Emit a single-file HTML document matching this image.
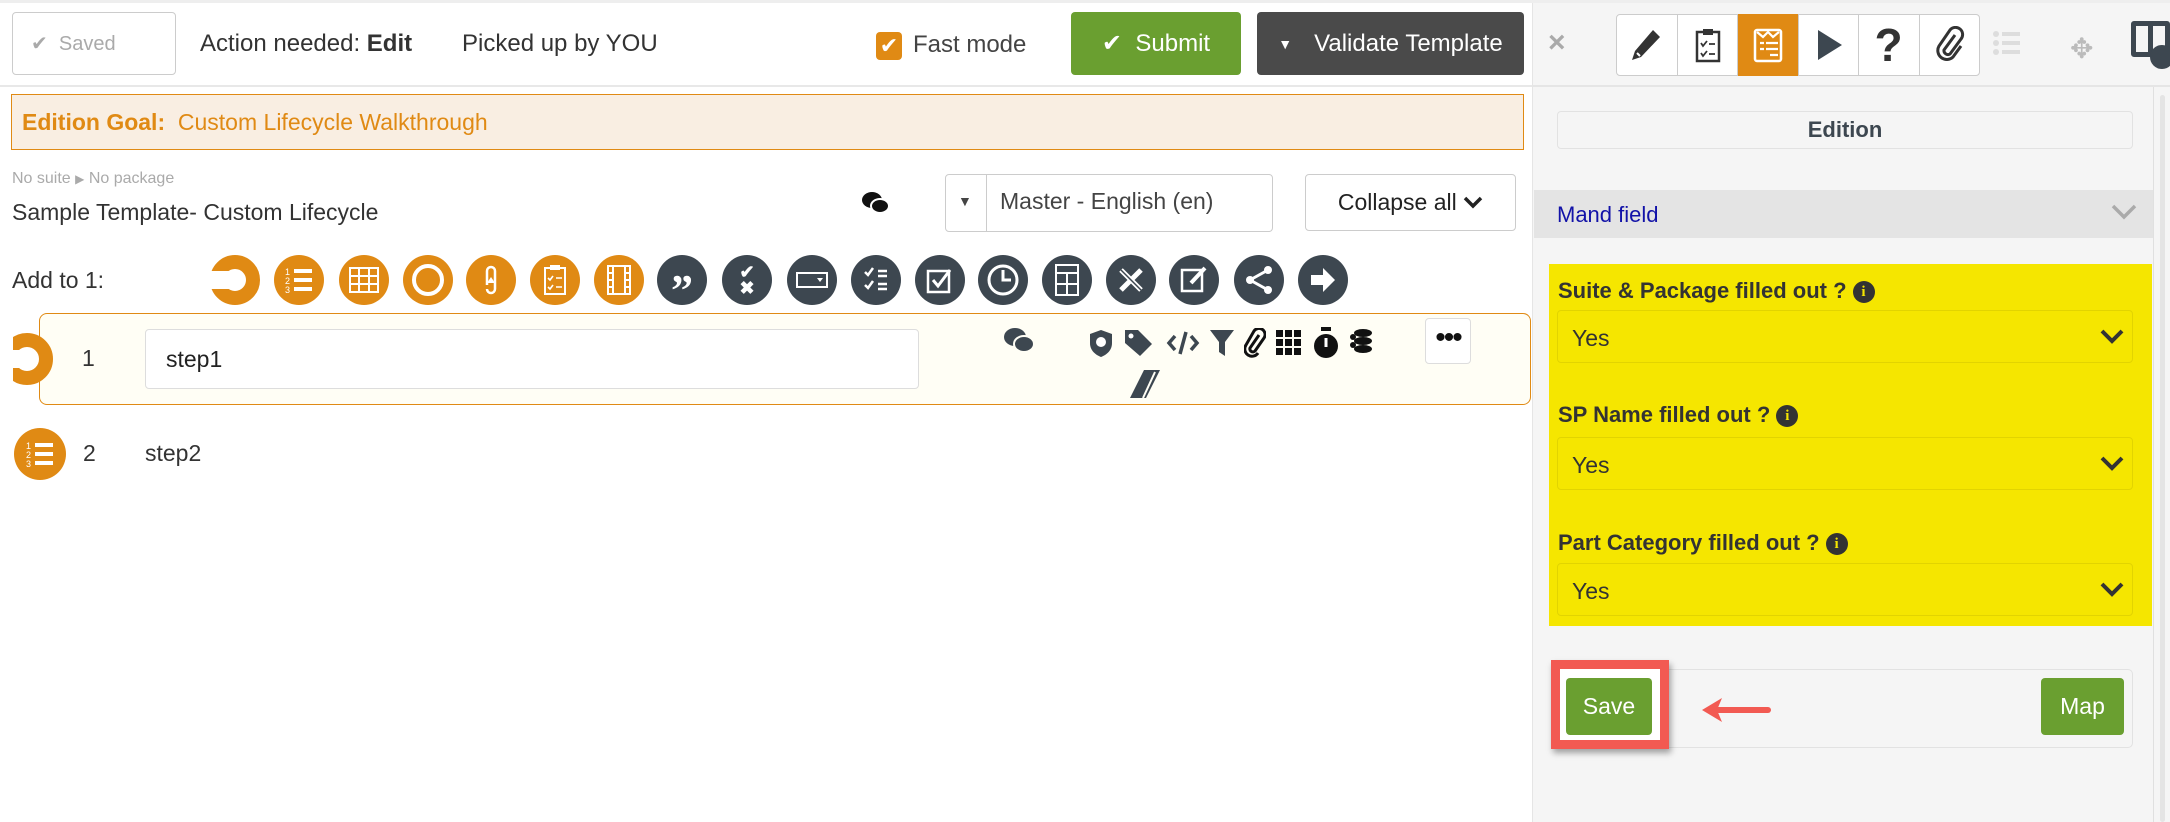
<!DOCTYPE html>
<html><head><meta charset="utf-8"><style>
*{box-sizing:border-box;margin:0;padding:0}
body{width:2170px;height:822px;position:relative;background:#fff;font-family:"Liberation Sans",sans-serif;color:#333;overflow:hidden}
.a{position:absolute}
.btn{position:absolute;border-radius:4px;display:flex;align-items:center;justify-content:center}
.c{position:absolute;width:50px;height:50px;border-radius:50%;top:255px;display:flex;align-items:center;justify-content:center}
.o{background:#e08a14}.d{background:#3d4750}
.sel{position:absolute;left:1557px;width:576px;height:53px;border:1px solid #e2d400;border-radius:4px;font-size:23px;color:#333;padding:14px 0 0 14px}
.lab{position:absolute;left:1558px;font-size:22px;font-weight:bold;color:#333}
.info{display:inline-block;width:22px;height:22px;border-radius:50%;background:#333;color:#f5e600;font-size:15px;text-align:center;line-height:22px;vertical-align:2px;margin-left:6px;font-family:"Liberation Serif",serif}
.tb{position:absolute;top:14px;width:60px;height:62px;border-left:1px solid #ccc;display:flex;align-items:center;justify-content:center}
</style></head><body>
<div class="a" style="left:0;top:0;width:2170px;height:3px;background:#eee"></div>
<div class="a" style="left:0;top:85px;width:1532px;height:2px;background:#e8e8e8"></div>
<div class="btn" style="left:12px;top:12px;width:164px;height:63px;border:1px solid #ccc;justify-content:flex-start;padding-left:18px;font-size:20px;color:#aaa">✔&nbsp;&nbsp;Saved</div>
<div class="a" style="left:200px;top:30px;font-size:24px;color:#333">Action needed: <b>Edit</b></div>
<div class="a" style="left:462px;top:30px;font-size:24px;color:#333">Picked up by YOU</div>
<div class="btn" style="left:876px;top:32px;width:26px;height:28px;background:#e08a14;color:#fff;font-size:22px">✔</div>
<div class="a" style="left:913px;top:31px;font-size:24px;color:#444">Fast mode</div>
<div class="btn" style="left:1071px;top:12px;width:170px;height:63px;background:#6a9f30;color:#fff;font-size:24px">✔&nbsp;&nbsp;Submit</div>
<div class="btn" style="left:1257px;top:12px;width:267px;height:63px;background:#4a4a4a;color:#fff;font-size:24px"><span style="font-size:14px;margin-right:22px">▼</span>Validate Template</div>
<div class="a" style="left:1532px;top:3px;width:638px;height:819px;background:#f5f5f5;border-left:1px solid #e5e5e5"></div>
<div class="a" style="left:1532px;top:85px;width:638px;height:2px;background:#e5e5e5"></div>
<div class="a" style="left:1548px;top:26px;font-size:30px;color:#aaa;font-weight:bold">×</div>
<div class="a" style="left:1616px;top:14px;width:364px;height:62px;background:#fff;border:1px solid #ccc;border-radius:4px"></div>
<div class="tb" style="left:1616px;border-left:none"><svg width="34" height="36" viewBox="0 0 34 36"><path d="M24 3l7 7L12 30l-9 3 3-9z" fill="#333"/><path d="M8 26l3 3" stroke="#fff" stroke-width="2"/></svg></div>
<div class="tb" style="left:1677px"><svg width="26" height="36" viewBox="0 0 26 36"><rect x="2" y="5" width="22" height="29" fill="none" stroke="#333" stroke-width="2.5"/><rect x="8" y="2" width="10" height="6" fill="#333"/><path d="M6 16l2 3 4-5M6 26l2 3 4-5M14 17h6M14 27h6" stroke="#333" stroke-width="1.8" fill="none"/></svg></div>
<div class="tb" style="left:1737px;background:#e08a14;width:61px"><svg width="30" height="36" viewBox="0 0 30 36"><rect x="2" y="3" width="26" height="31" fill="none" stroke="#fff" stroke-width="2.5" rx="2"/><path d="M4 5l6 5 5-5 5 5 6-5M7 16h4M13 16h12M7 22h4M13 22h12M17 28h8" stroke="#fff" stroke-width="2.2" fill="none"/></svg></div>
<div class="tb" style="left:1798px"><svg width="28" height="34" viewBox="0 0 28 34"><path d="M3 2l24 15L3 32z" fill="#3d4750"/></svg></div>
<div class="tb" style="left:1858px"><span style="font-size:46px;font-weight:bold;color:#333">?</span></div>
<div class="tb" style="left:1919px"><svg width="30" height="38" viewBox="0 0 30 38"><path d="M20 9L9 24a4 4 0 006 4l11-15a7 7 0 00-11-9L4 20a9 9 0 0014 11l8-11" fill="none" stroke="#333" stroke-width="3"/></svg></div>
<div class="a" style="left:1993px;top:30px;width:28px;height:26px"><svg width="28" height="26"><g fill="#ddd"><circle cx="3" cy="4" r="3"/><circle cx="3" cy="13" r="3"/><circle cx="3" cy="22" r="3"/><rect x="9" y="2" width="18" height="4"/><rect x="9" y="11" width="18" height="4"/><rect x="9" y="20" width="18" height="4"/></g></svg></div>
<div class="a" style="left:2070px;top:32px;font-size:28px;color:#bbb">✥</div>
<div class="a" style="left:2131px;top:21px;width:39px;height:36px;border:5px solid #3d4750;border-radius:3px"><div style="position:absolute;left:12px;top:0;width:5px;height:30px;background:#3d4750"></div></div>
<div class="a" style="left:2150px;top:45px;width:24px;height:24px;border-radius:50%;background:#3d4750"></div>
<div class="a" style="left:2153px;top:87px;width:17px;height:735px;background:#f5f5f5;border-left:1px solid #e0e0e0"></div>
<div class="a" style="left:2160px;top:95px;width:5px;height:727px;background:#e4e4e4;border-radius:3px"></div>
<div class="btn" style="left:1557px;top:111px;width:576px;height:38px;border:1px solid #e2e2e2;background:#f5f5f5;font-size:22px;font-weight:bold;color:#3d4750">Edition</div>
<div class="a" style="left:1534px;top:190px;width:619px;height:48px;background:#e4e4e4"></div>
<div class="a" style="left:1557px;top:202px;font-size:22px;color:#1212a8">Mand field</div>
<div class="a" style="left:2110px;top:203px"><svg width="28" height="18"><path d="M3 3l11 11L25 3" stroke="#aaa" stroke-width="3.5" fill="none"/></svg></div>
<div class="a" style="left:1549px;top:264px;width:603px;height:362px;background:#f5e600"></div>
<div class="lab" style="top:278px">Suite &amp; Package filled out ?<span class="info">i</span></div>
<div class="sel" style="top:310px">Yes</div>
<div class="lab" style="top:402px">SP Name filled out ?<span class="info">i</span></div>
<div class="sel" style="top:437px">Yes</div>
<div class="lab" style="top:530px">Part Category filled out ?<span class="info">i</span></div>
<div class="sel" style="top:563px">Yes</div>
<svg class="a" style="left:2099px;top:328px" width="26" height="18"><path d="M3 3l10 10L23 3" stroke="#333" stroke-width="4" fill="none"/></svg>
<svg class="a" style="left:2099px;top:455px" width="26" height="18"><path d="M3 3l10 10L23 3" stroke="#333" stroke-width="4" fill="none"/></svg>
<svg class="a" style="left:2099px;top:581px" width="26" height="18"><path d="M3 3l10 10L23 3" stroke="#333" stroke-width="4" fill="none"/></svg>
<div class="a" style="left:1557px;top:669px;width:576px;height:79px;border:1px solid #e2e2e2;border-radius:5px;background:#f5f5f5"></div>
<div class="a" style="left:1551px;top:660px;width:118px;height:89px;border:9px solid #f25a52;box-shadow:2px 4px 6px rgba(0,0,0,.35);background:#fff"></div>
<div class="btn" style="left:1566px;top:678px;width:86px;height:57px;background:#6a9f30;color:#fff;font-size:23px">Save</div>
<svg class="a" style="left:1700px;top:696px" width="75" height="30"><path d="M68 14H14" stroke="#f25a52" stroke-width="6" stroke-linecap="round"/><path d="M2 14L22 2 17 14 22 26z" fill="#f25a52"/></svg>
<div class="btn" style="left:2041px;top:678px;width:83px;height:57px;background:#6a9f30;color:#fff;font-size:23px">Map</div>
<div class="a" style="left:11px;top:94px;width:1513px;height:56px;background:#f9eee2;border:1.5px solid #e08a14"></div>
<div class="a" style="left:22px;top:109px;font-size:23px;color:#e08a14"><b>Edition Goal:</b>&nbsp;&nbsp;Custom Lifecycle Walkthrough</div>
<div class="a" style="left:12px;top:170px;font-size:16px;color:#aaa">No suite <span style="font-size:12px">▶</span> No package</div>
<div class="a" style="left:12px;top:199px;font-size:23px;color:#333">Sample Template- Custom Lifecycle</div>
<svg class="a" style="left:861px;top:191px" width="30" height="26"><ellipse cx="11" cy="9" rx="10" ry="8" fill="#111"/><ellipse cx="19" cy="15" rx="9" ry="7" fill="#111" stroke="#fff" stroke-width="2"/></svg>
<div class="a" style="left:945px;top:174px;width:328px;height:58px;border:1px solid #ccc;border-radius:4px;background:#fff"></div>
<div class="a" style="left:986px;top:174px;width:1px;height:58px;background:#ccc"></div>
<div class="a" style="left:958px;top:193px;font-size:14px;color:#444">▼</div>
<div class="a" style="left:1000px;top:188px;font-size:23px;color:#444">Master - English (en)</div>
<div class="btn" style="left:1305px;top:174px;width:211px;height:57px;border:1px solid #ccc;background:#fff;font-size:23px;color:#222">Collapse all&nbsp;<svg width="20" height="14"><path d="M2 2l8 8 8-8" stroke="#222" stroke-width="3.5" fill="none"/></svg></div>
<div class="a" style="left:12px;top:267px;font-size:23px;color:#333">Add to 1:</div>
<div class="c" style="left:210px;background:none"><svg width="50" height="50"><circle cx="25" cy="25" r="18" fill="none" stroke="#e08a14" stroke-width="14"/><rect x="0" y="16" width="24" height="18" fill="#fff"/></svg></div>
<div class="c o" style="left:274px"><svg width="30" height="30"><g fill="#fff"><rect x="10" y="4" width="18" height="4"/><rect x="10" y="13" width="18" height="4"/><rect x="10" y="22" width="18" height="4"/><text x="1" y="10" font-size="9">1</text><text x="1" y="19" font-size="9">2</text><text x="1" y="28" font-size="9">3</text></g></svg></div>
<div class="c o" style="left:339px"><svg width="30" height="26"><rect x="1" y="1" width="28" height="24" fill="none" stroke="#fff" stroke-width="2"/><path d="M1 9h28M1 17h28M10 1v24M20 1v24" stroke="#fff" stroke-width="2"/></svg></div>
<div class="c o" style="left:403px"><div style="width:32px;height:32px;border:4px solid #fff;border-radius:50%"></div></div>
<div class="c o" style="left:466px"><svg width="20" height="34"><path d="M6 22V8a4 4 0 0 1 8 0v18a4 4 0 0 1-8 0" fill="none" stroke="#fff" stroke-width="2.5"/><path d="M10 14l-4 6h8z" fill="#fff"/></svg></div>
<div class="c o" style="left:530px"><svg width="24" height="32"><rect x="2" y="4" width="20" height="26" fill="none" stroke="#fff" stroke-width="2"/><rect x="7" y="1" width="10" height="5" fill="#fff"/><path d="M5 14l2 2 3-4M5 23l2 2 3-4M13 14h6M13 23h6" stroke="#fff" stroke-width="1.6" fill="none"/></svg></div>
<div class="c o" style="left:594px"><svg width="26" height="32"><rect x="2" y="2" width="22" height="28" fill="none" stroke="#fff" stroke-width="2"/><path d="M7 2v28M19 2v28M2 9h5M2 16h5M2 23h5M19 9h5M19 16h5M19 23h5" stroke="#fff" stroke-width="2"/></svg></div>
<div class="c d" style="left:657px;color:#fff;font-size:44px;font-weight:bold;padding-top:20px;font-family:'Liberation Serif',serif">”</div>
<div class="c d" style="left:722px;color:#fff;font-size:18px;font-weight:bold;line-height:16px;text-align:center;flex-direction:column">✔<br>✖</div>
<div class="c d" style="left:787px"><svg width="32" height="16"><rect x="1" y="1" width="30" height="14" fill="none" stroke="#fff" stroke-width="2"/><path d="M21 6h6l-3 4z" fill="#fff"/></svg></div>
<div class="c d" style="left:851px"><svg width="26" height="30"><path d="M2 7l3 3 5-7M2 20l3 3 5-7" stroke="#fff" stroke-width="2.5" fill="none"/><path d="M15 6h9M15 11h9M15 19h9M15 24h9" stroke="#fff" stroke-width="2.5"/></svg></div>
<div class="c d" style="left:915px"><svg width="28" height="28"><rect x="2" y="5" width="21" height="21" fill="none" stroke="#fff" stroke-width="2.5"/><path d="M7 14l5 6 12-16" stroke="#fff" stroke-width="3" fill="none"/></svg></div>
<div class="c d" style="left:978px"><svg width="34" height="34"><circle cx="17" cy="17" r="14" fill="none" stroke="#fff" stroke-width="3"/><path d="M17 7v10h8" stroke="#fff" stroke-width="3" fill="none"/></svg></div>
<div class="c d" style="left:1042px"><svg width="24" height="32"><rect x="1" y="1" width="22" height="30" fill="none" stroke="#fff" stroke-width="2"/><path d="M1 9h22M12 9v22M1 20h22" stroke="#fff" stroke-width="2"/></svg></div>
<div class="c d" style="left:1106px"><svg width="30" height="30"><path d="M5 5l20 20M25 5L5 25" stroke="#fff" stroke-width="5"/><path d="M5 5l20 20" stroke="#3d4750" stroke-width="1.5"/></svg></div>
<div class="c d" style="left:1169px"><svg width="30" height="30"><rect x="3" y="5" width="20" height="21" fill="none" stroke="#fff" stroke-width="2.5"/><path d="M12 18l14-15" stroke="#fff" stroke-width="4"/></svg></div>
<div class="c d" style="left:1234px"><svg width="30" height="30"><circle cx="6" cy="15" r="4" fill="#fff"/><circle cx="24" cy="5" r="4" fill="#fff"/><circle cx="24" cy="25" r="4" fill="#fff"/><path d="M6 15L24 5M6 15l18 10" stroke="#fff" stroke-width="3"/></svg></div>
<div class="c d" style="left:1298px"><svg width="28" height="26"><path d="M2 8h12V1l12 12-12 12v-7H2z" fill="#fff"/></svg></div>
<div class="a" style="left:39px;top:313px;width:1492px;height:92px;background:#fffef5;border:1.5px solid #e08a14;border-radius:8px"></div>
<div class="a" style="left:10px;top:333px"><svg width="44" height="52"><circle cx="17" cy="26" r="19" fill="none" stroke="#e08a14" stroke-width="14"/><rect x="0" y="17" width="17" height="18" fill="#fff"/><rect x="0" y="0" width="3" height="52" fill="#fff"/></svg></div>
<div class="a" style="left:82px;top:345px;font-size:23px;color:#333">1</div>
<div class="a" style="left:145px;top:329px;width:774px;height:60px;border:1px solid #ddd;border-radius:4px;background:#fff;font-size:23px;color:#222;padding:16px 0 0 20px">step1</div>
<svg class="a" style="left:1003px;top:327px" width="34" height="28"><ellipse cx="12" cy="10" rx="11" ry="9" fill="#3d4750"/><ellipse cx="21" cy="17" rx="10" ry="8" fill="#3d4750" stroke="#fffef5" stroke-width="2"/></svg>
<div class="a" style="left:1088px;top:326px;display:flex;gap:9px;align-items:center;font-size:24px;color:#111">
<svg width="26" height="30"><path d="M13 2l11 4v9c0 8-6 12-11 14C8 27 2 23 2 15V6z" fill="#3d4750"/><circle cx="13" cy="14" r="5" fill="#fff"/></svg>
<svg width="34" height="30"><path d="M2 2h13l14 14-12 12L2 15z" fill="#3d4750"/><circle cx="8" cy="8" r="2.5" fill="#fff"/></svg>
<svg width="34" height="28"><path d="M9 7l-6 7 6 7M25 7l6 7-6 7M20 3l-6 22" stroke="#3d4750" stroke-width="3.5" fill="none"/></svg>
<svg width="26" height="30"><path d="M1 2h24l-9 12v14l-6-4V14z" fill="#3d4750"/></svg>
<svg width="22" height="30"><path d="M15 7L6 20a3 3 0 005 3l9-13a6 6 0 00-10-7L2 17a7 7 0 0012 8" fill="none" stroke="#111" stroke-width="3"/></svg>
<svg width="28" height="28"><g fill="#111"><rect x="1" y="1" width="7" height="7"/><rect x="10" y="1" width="7" height="7"/><rect x="19" y="1" width="7" height="7"/><rect x="1" y="10" width="7" height="7"/><rect x="10" y="10" width="7" height="7"/><rect x="19" y="10" width="7" height="7"/><rect x="1" y="19" width="7" height="7"/><rect x="10" y="19" width="7" height="7"/><rect x="19" y="19" width="7" height="7"/></g></svg>
<svg width="28" height="34"><rect x="9" y="1" width="10" height="4" fill="#111"/><circle cx="14" cy="20" r="12" fill="#111"/><path d="M14 12v9" stroke="#fff" stroke-width="3"/></svg>
<svg width="24" height="30"><g fill="#111"><ellipse cx="14" cy="5" rx="9" ry="4"/><ellipse cx="14" cy="13" rx="9" ry="4"/><ellipse cx="14" cy="21" rx="9" ry="4"/><circle cx="4" cy="9" r="3"/><circle cx="4" cy="17" r="3"/></g></svg>
</div>
<div class="btn" style="left:1425px;top:318px;width:46px;height:46px;border:1px solid #ddd;background:#fff;font-size:30px;color:#111;letter-spacing:-2px;padding-bottom:6px">•••</div>
<svg class="a" style="left:1128px;top:368px" width="34" height="32"><path d="M16 2h16L18 30H2z" fill="#3d4750"/><path d="M15 30L27 4" stroke="#fffef5" stroke-width="2"/></svg>
<div class="a" style="left:14px;top:428px;width:52px;height:52px;border-radius:50%;background:#e08a14;display:flex;align-items:center;justify-content:center"><svg width="30" height="30"><g fill="#fff"><rect x="10" y="4" width="18" height="4"/><rect x="10" y="13" width="18" height="4"/><rect x="10" y="22" width="18" height="4"/><text x="1" y="10" font-size="9">1</text><text x="1" y="19" font-size="9">2</text><text x="1" y="28" font-size="9">3</text></g></svg></div>
<div class="a" style="left:83px;top:440px;font-size:23px;color:#333">2</div>
<div class="a" style="left:145px;top:440px;font-size:23px;color:#333">step2</div>
</body></html>
